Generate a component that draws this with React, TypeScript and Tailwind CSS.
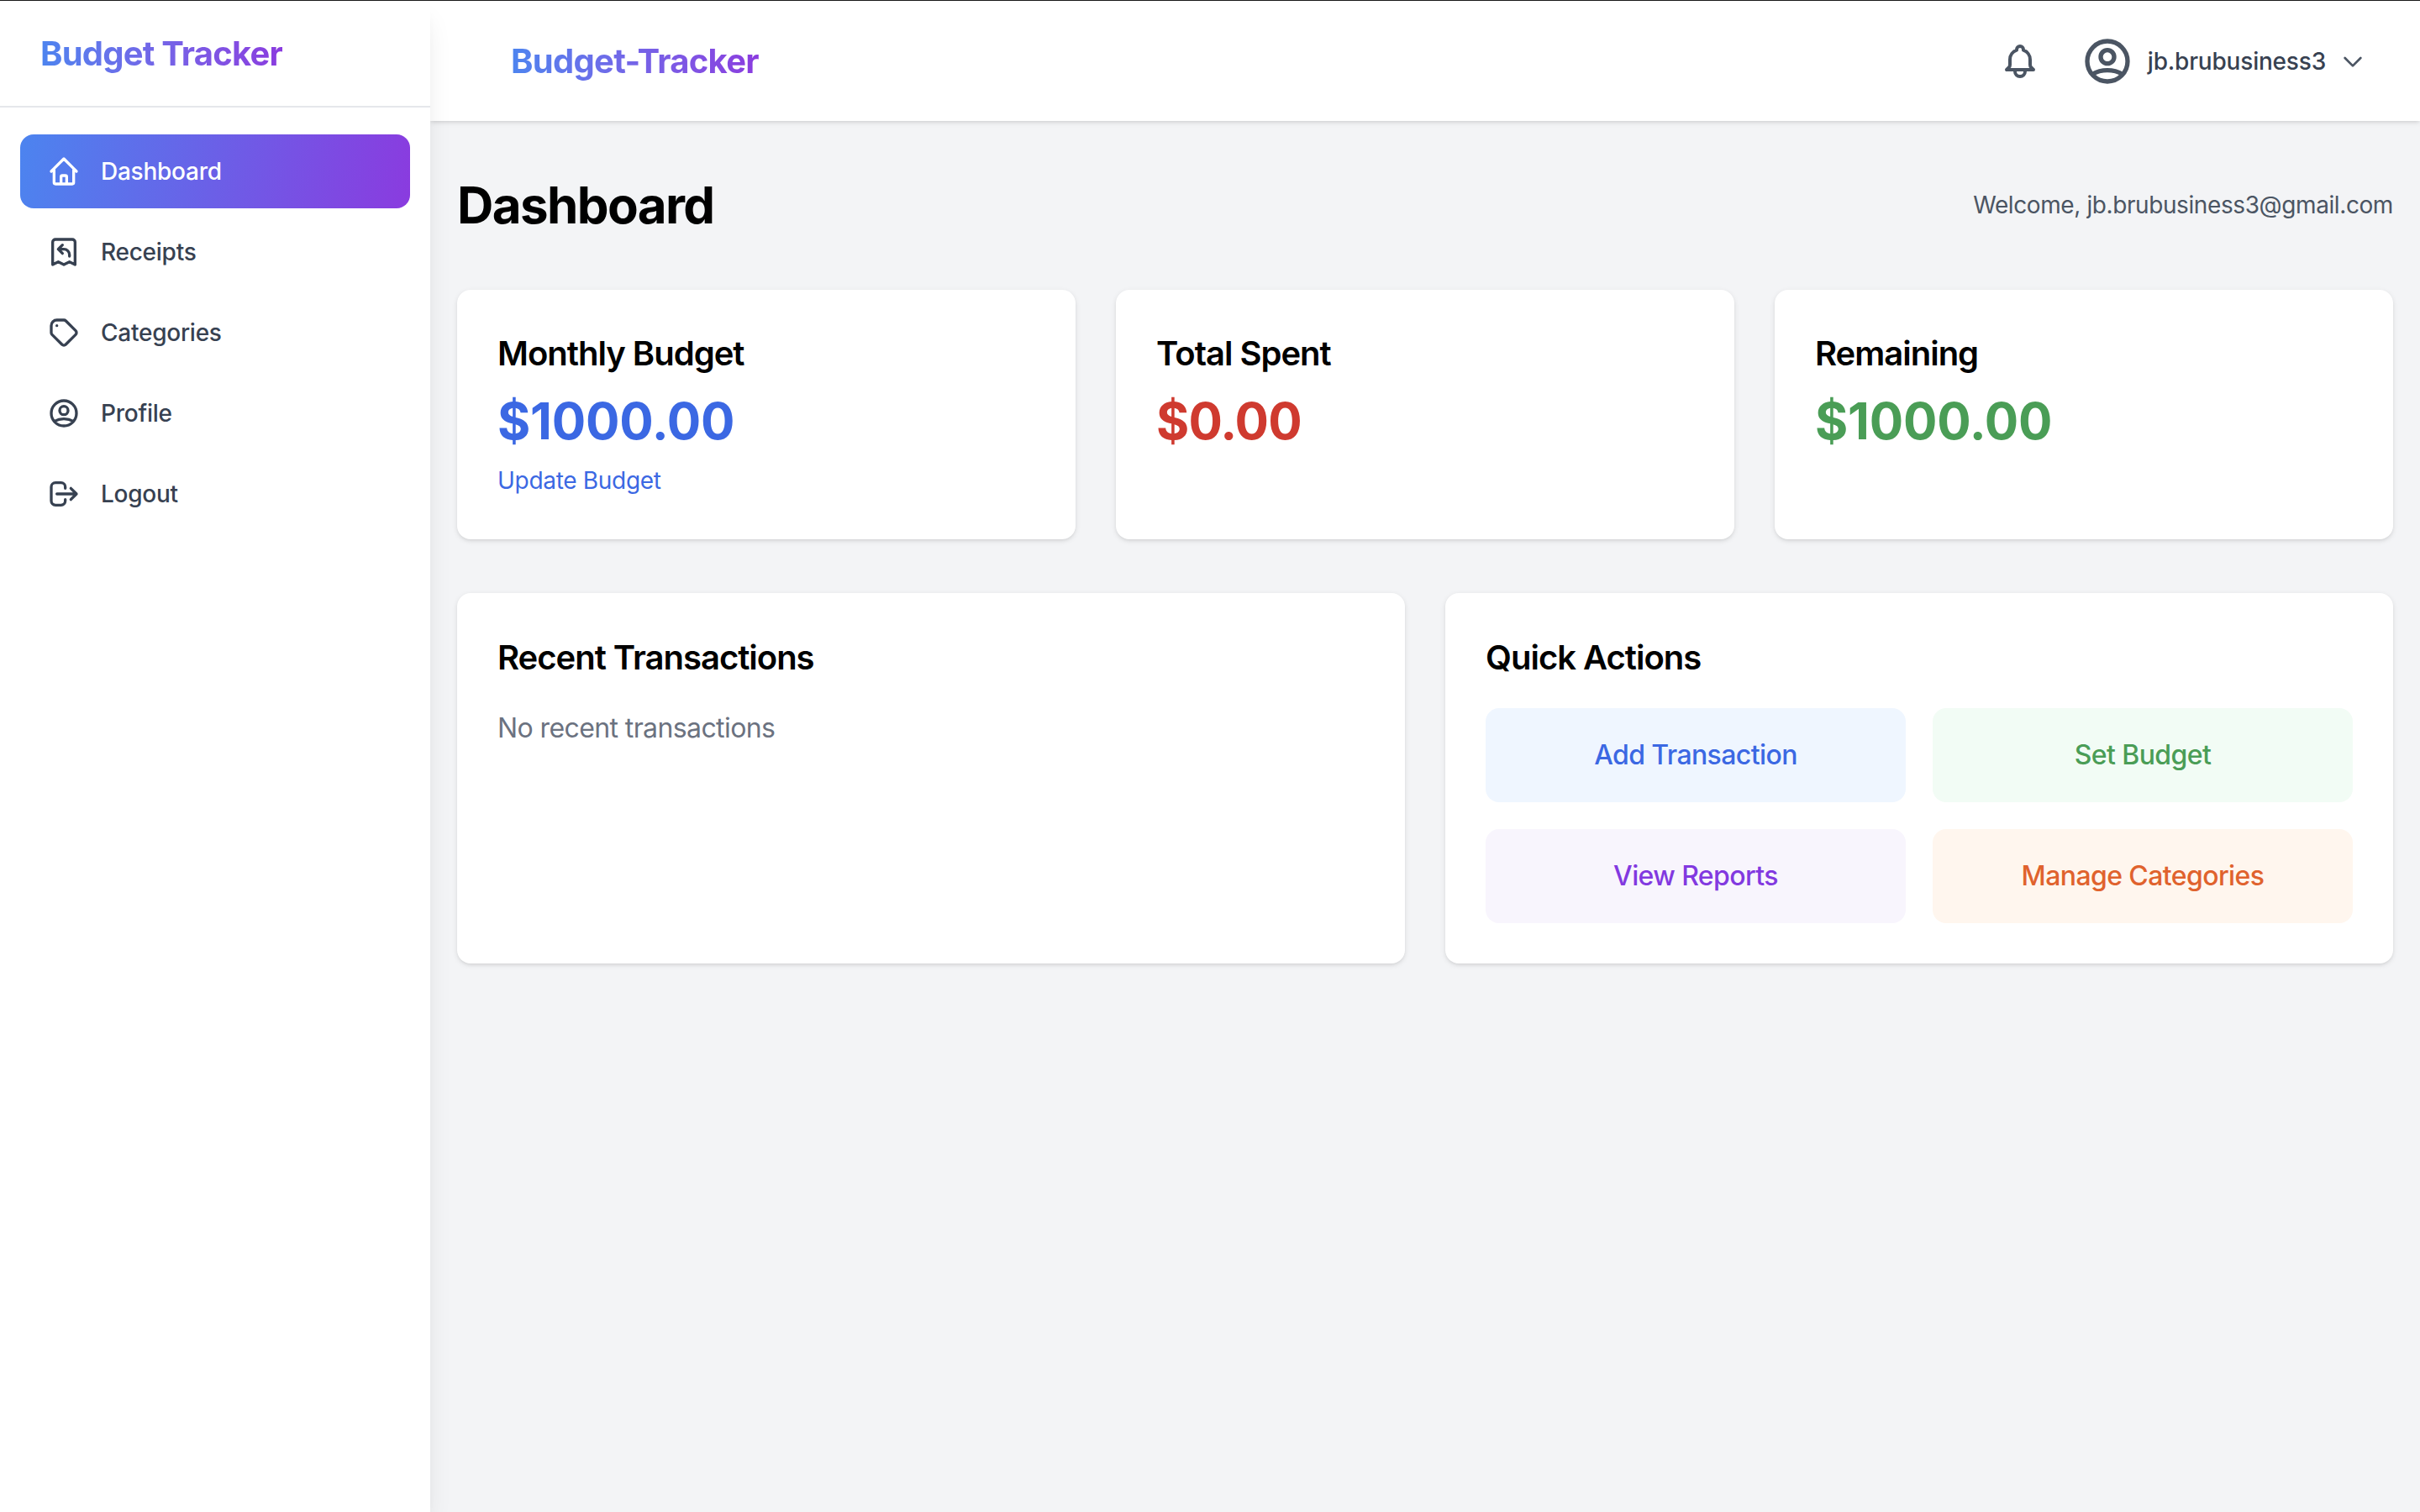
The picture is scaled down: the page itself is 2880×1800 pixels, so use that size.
import React from "react";
import {
  HiOutlineBell,
  HiOutlineChevronDown,
  HiOutlineHome,
  HiOutlineLogout,
  HiOutlineReceiptRefund,
  HiOutlineTag,
  HiOutlineUserCircle,
} from "react-icons/hi";

const navItems = [
  { label: "Dashboard", icon: HiOutlineHome, active: true },
  { label: "Receipts", icon: HiOutlineReceiptRefund, active: false },
  { label: "Categories", icon: HiOutlineTag, active: false },
  { label: "Profile", icon: HiOutlineUserCircle, active: false },
  { label: "Logout", icon: HiOutlineLogout, active: false },
];

const cardClass =
  "bg-white rounded-2xl p-12 shadow-[0_2px_6px_rgba(0,0,0,0.1),0_2px_4px_-2px_rgba(0,0,0,0.1)]";
const titleClass =
  "text-[40px] leading-[56px] font-semibold tracking-[-1px] text-black";
const valueClass = "text-[60px] leading-[80px] font-bold mt-3";

const App: React.FC = () => {
  return (
    <div className="flex flex-col h-[1800px] w-[2880px] overflow-hidden bg-[#f3f4f6] font-['Inter',sans-serif]">
      {/* Window edge */}
      <div className="h-px shrink-0 bg-[#1a1a1a]" />

      <div className="flex flex-1 min-h-0">
        {/* Sidebar */}
        <aside className="w-[512px] shrink-0 bg-white shadow-[0_20px_30px_-6px_rgba(0,0,0,0.1),0_8px_12px_-8px_rgba(0,0,0,0.1)] z-20">
          <div className="h-[127px] border-b-2 border-[#e5e7eb] px-12 flex items-center">
            <span className="text-[40px] font-bold tracking-[-0.8px] bg-gradient-to-r from-[#4c84ef] to-[#8a3bdf] bg-clip-text text-transparent">
              Budget Tracker
            </span>
          </div>

          <nav className="flex flex-col gap-2 px-6 pt-8">
            {navItems.map((item) => (
              <a
                key={item.label}
                className={`flex items-center h-[88px] px-8 gap-6 rounded-2xl text-[28px] font-medium tracking-[-0.25px] ${
                  item.active
                    ? "bg-[linear-gradient(100deg,#4c84ef,#8a3bdf)] text-white"
                    : "text-[#374151]"
                }`}
              >
                <item.icon className="w-10 h-10" />
                {item.label}
              </a>
            ))}
          </nav>
        </aside>

        <div className="flex flex-col flex-1 min-w-0">
          {/* Header */}
          <header className="h-[143px] shrink-0 bg-white shadow-[0_2px_6px_rgba(0,0,0,0.1),0_2px_4px_-2px_rgba(0,0,0,0.1)] z-10 flex items-center justify-between pl-24 pr-16">
            <span className="text-[40px] font-bold tracking-[-0.7px] bg-gradient-to-r from-[#4c84ef] to-[#8a3bdf] bg-clip-text text-transparent">
              Budget-Tracker
            </span>

            <div className="flex items-center gap-12 text-[#4b5563]">
              <HiOutlineBell className="w-12 h-12" />
              <div className="flex items-center gap-4">
                <HiOutlineUserCircle className="w-16 h-16" />
                <span className="text-[28px] font-medium tracking-[-0.2px] text-[#374151]">
                  jb.brubusiness3
                </span>
                <HiOutlineChevronDown className="w-8 h-8" />
              </div>
            </div>
          </header>

          {/* Main */}
          <main className="flex-1 p-8 pt-[60px]">
            <div className="flex items-center justify-between mb-[61px]">
              <h1 className="text-[60px] leading-[80px] font-bold tracking-[-1.6px] text-black">
                Dashboard
              </h1>
              <p className="text-[28px] tracking-[-0.4px] text-[#4b5563]">
                Welcome, jb.brubusiness3@gmail.com
              </p>
            </div>

            {/* Stat cards */}
            <div className="grid grid-cols-3 gap-12 mb-16">
              <div className={`${cardClass} h-[297px]`}>
                <h3 className={titleClass}>Monthly Budget</h3>
                <p className={`${valueClass} tracking-[-0.2px] text-[#3b68e3]`}>$1000.00</p>
                <a className="block mt-[10px] text-[28px] tracking-[-0.3px] text-[#3b68e3]">
                  Update Budget
                </a>
              </div>

              <div className={`${cardClass} h-[297px]`}>
                <h3 className={titleClass}>Total Spent</h3>
                <p className={`${valueClass} tracking-[-0.9px] text-[#cf3a2f]`}>$0.00</p>
              </div>

              <div className={`${cardClass} h-[297px]`}>
                <h3 className={titleClass}>Remaining</h3>
                <p className={`${valueClass} tracking-[-0.2px] text-[#4a9d56]`}>$1000.00</p>
              </div>
            </div>

            <div className="grid grid-cols-2 gap-12">
              {/* Recent Transactions */}
              <div className={cardClass}>
                <h3 className={`${titleClass} mt-px mb-8`}>Recent Transactions</h3>
                <p className="text-[32px] leading-[48px] tracking-[-0.6px] text-[#6b7280]">
                  No recent transactions
                </p>
              </div>

              {/* Quick Actions */}
              <div className={cardClass}>
                <h3 className={`${titleClass} mt-px mb-8`}>Quick Actions</h3>
                <div className="grid grid-cols-2 gap-8 text-[32px] leading-[48px] font-medium tracking-[-0.6px] text-center">
                  <button className="py-8 rounded-2xl bg-[#eff6ff] text-[#3b68e3]">
                    Add Transaction
                  </button>
                  <button className="py-8 rounded-2xl bg-[#f2fcf5] text-[#4a9d56]">
                    Set Budget
                  </button>
                  <button className="py-8 rounded-2xl bg-[#f8f5fd] text-[#8239e0]">
                    View Reports
                  </button>
                  <button className="py-8 rounded-2xl bg-[#fff6ee] text-[#e0622d]">
                    Manage Categories
                  </button>
                </div>
              </div>
            </div>
          </main>
        </div>
      </div>
    </div>
  );
};

export default App;
